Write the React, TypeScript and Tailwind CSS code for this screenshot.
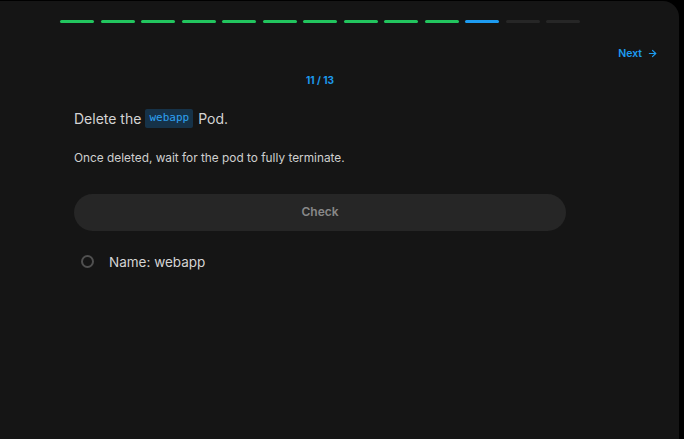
import { ArrowRight } from 'lucide-react';

const steps = Array.from({ length: 13 }, (_, i) => i);

export default function App() {
  const current = 10;

  return (
    <div className="h-[439px] w-[684px] overflow-hidden bg-black font-['Inter',sans-serif]">
      <div className="mt-px h-[460px] w-[679px] rounded-tr-2xl bg-[#151515]">
        {/* progress */}
        <div className="flex w-[640px] gap-[6.5px] px-[60px] pt-[19px]">
          {steps.map(i => (
            <div
              key={i}
              className={
                i < current
                  ? 'h-[3px] flex-1 rounded-full bg-[#22c55e]'
                  : i === current
                  ? 'h-[3px] flex-1 rounded-full bg-[#1d9bf0]'
                  : 'h-[3px] flex-1 rounded-full bg-[#262626]'
              }
            />
          ))}
        </div>

        <div className="mt-[23px] flex justify-end pr-[21px]">
          <button className="flex items-center gap-[5px] text-[10.5px] font-semibold text-[#1d9bf0]">
            Next
            <ArrowRight size={11} strokeWidth={2.5} />
          </button>
        </div>

        <div className="w-[640px]">
          <div className="mt-[11px] text-center text-[10px] font-bold text-[#1d9bf0]">11 / 13</div>
        </div>

        <div className="ml-[74px] w-[492px]">
          <p className="mt-[20px] flex items-center text-[14px] text-[#d4d4d4]">
            Delete the
            <code className="ml-[4px] mr-[5px] rounded-[2px] bg-[#163248] px-[4px] py-[1px] font-['DejaVu_Sans_Mono',monospace] text-[11px] text-[#2ea0f0]">
              webapp
            </code>
            Pod.
          </p>
          <p className="mt-[21px] text-[11.85px] text-[#cfcfcf]">Once deleted, wait for the pod to fully terminate.</p>

          <button className="mt-[26px] flex h-[37px] w-full items-center justify-center rounded-full bg-[#262626] text-[12px] font-semibold text-[#888888]">
            Check
          </button>

          <div className="mt-[21px] flex items-center gap-[15px] pl-[7px]">
            <span className="h-[13px] w-[13px] rounded-full border-2 border-[#505050]" />
            <span className="text-[13.5px] text-[#d4d4d4]">Name: webapp</span>
          </div>
        </div>
      </div>
    </div>
  );
}
